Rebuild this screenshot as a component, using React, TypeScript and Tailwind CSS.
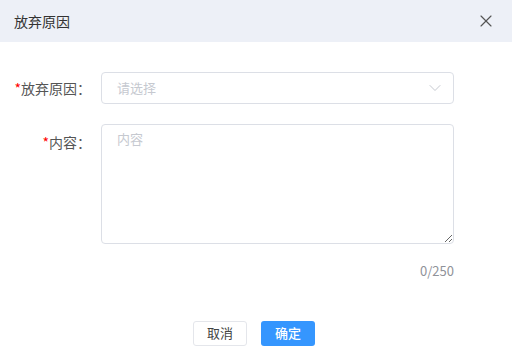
import { X, ChevronDown } from "lucide-react";

const font = { fontFamily: '"Noto Sans CJK SC", "Noto Sans", sans-serif' };

export default function App() {
  return (
    <div className="w-[512px] h-[364px] bg-white flex flex-col" style={font}>
      {/* Header */}
      <div className="h-[42px] bg-[#edf0f7] flex items-center justify-between pl-[14px] pr-[16px]">
        <span className="text-[14px] text-[#333]">放弃原因</span>
        <X className="w-[20px] h-[20px] text-[#555]" strokeWidth={1.4} />
      </div>

      {/* Form */}
      <div className="flex flex-col pt-[30px] pr-[58px]">
        <div className="flex items-center h-[32px]">
          <label className="w-[101px] pr-[10px] text-right text-[14px] text-[#555]">
            <span className="text-[#f00]">*</span>放弃原因：
          </label>
          <div className="flex-1 h-[32px] border border-[#dcdfe6] rounded-[4px] flex items-center justify-between pl-[15px] pr-[8px]">
            <span className="text-[13px] text-[#c6c9d0]">请选择</span>
            <ChevronDown className="w-[20px] h-[20px] text-[#c6c9d0]" strokeWidth={1.2} />
          </div>
        </div>

        <div className="flex items-start mt-[20px]">
          <label className="w-[101px] pr-[10px] text-right text-[14px] text-[#555] leading-[32px] mt-[2px]">
            <span className="text-[#f00]">*</span>内容：
          </label>
          <textarea
            placeholder="内容"
            className="flex-1 h-[120px] border border-[#dcdfe6] rounded-[4px] px-[15px] py-[4px] text-[13px] outline-none placeholder:text-[#c6c9d0]"
          />
        </div>

        <div className="text-right text-[13px] text-[#8f9299] mt-[17px]">0/250</div>
      </div>

      {/* Footer */}
      <div className="flex justify-center gap-[14px] mt-[40px] pr-[4px]">
        <button className="w-[54px] h-[25px] border border-[#e4e6eb] rounded-[3px] text-[13px] text-[#444] bg-white">
          取消
        </button>
        <button className="w-[54px] h-[25px] rounded-[3px] text-[13px] text-white bg-[#3596fe] font-medium">
          确定
        </button>
      </div>
    </div>
  );
}
